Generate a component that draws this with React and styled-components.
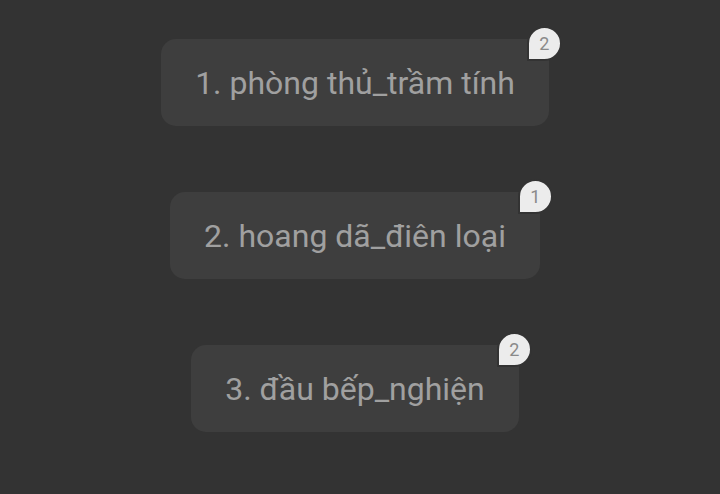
import React from "react";
import styled, { createGlobalStyle } from "styled-components";

const items = [
  { label: "1. phòng thủ_trầm tính", count: 2 },
  { label: "2. hoang dã_điên loại", count: 1 },
  { label: "3. đầu bếp_nghiện", count: 2 },
];

const App = () => {
  return (
    <>
      <GlobalStyle />
      <Page>
        {items.map((item) => (
          <Choice key={item.label}>
            {item.label}
            <Badge>{item.count}</Badge>
          </Choice>
        ))}
      </Page>
    </>
  );
};

const GlobalStyle = createGlobalStyle`
  html, body {
    margin: 0;
    background: #333333;
  }
`;

const Page = styled.div`
  height: 494px;
  box-sizing: border-box;
  padding: 39px 10px 0 0;
  display: flex;
  flex-direction: column;
  align-items: center;
  gap: 66px;
  font-family: Roboto, "Noto Sans", sans-serif;
`;

const Choice = styled.div`
  position: relative;
  height: 87px;
  box-sizing: border-box;
  padding: 0 34px;
  display: flex;
  align-items: center;
  background: #3e3e3e;
  border-radius: 15px;
  color: #a0a0a0;
  font-size: 32px;
  white-space: nowrap;
`;

const Badge = styled.span`
  position: absolute;
  top: -13px;
  right: -13px;
  width: 31px;
  height: 31px;
  display: flex;
  align-items: center;
  justify-content: center;
  background: #ececec;
  color: #8a8a8a;
  font-size: 18px;
  border: 2px solid #333333;
  border-radius: 50% 50% 50% 0;
`;

export default App;
